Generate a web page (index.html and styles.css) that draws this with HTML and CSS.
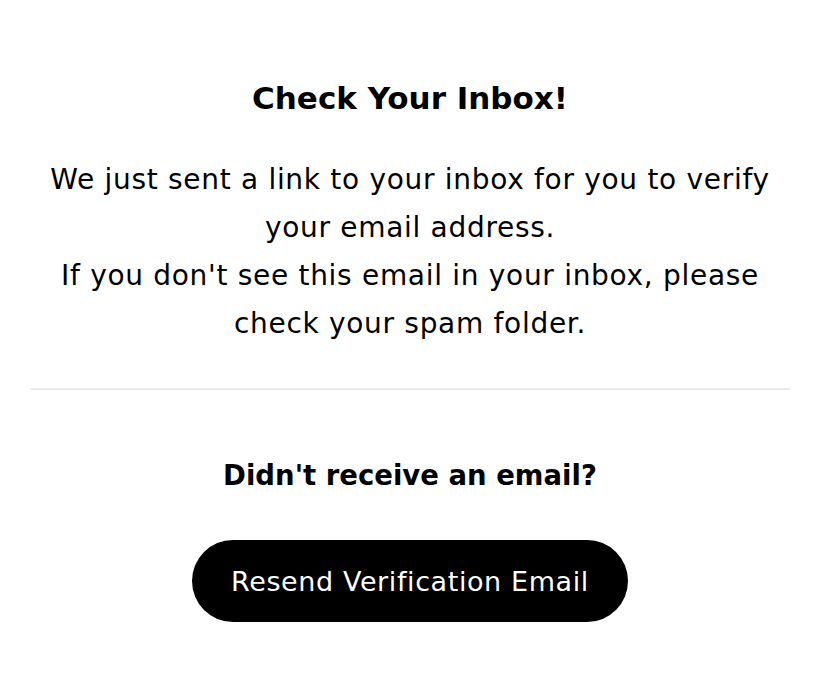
FILE: index.html
```html
<!DOCTYPE html>
<html lang="en">
<head>
<meta charset="utf-8">
<title>Check Your Inbox</title>
<link rel="stylesheet" href="styles.css">
</head>
<body>
<main class="card">
  <section class="top">
    <h1 class="title">Check Your Inbox!</h1>
    <p class="message">We just sent a link to your inbox for you to verify your email address.<br>If you don't see this email in your inbox, please check your spam folder.</p>
  </section>
  <hr class="divider">
  <section class="bottom">
    <h2 class="subtitle">Didn't receive an email?</h2>
    <button class="resend" type="button">Resend Verification Email</button>
  </section>
</main>
</body>
</html>
```
FILE: styles.css
```css
* { box-sizing: border-box; }
html, body { margin: 0; padding: 0; background: #fff; }
body {
  font-family: "DejaVu Sans", "Noto Sans", sans-serif;
  color: #000;
}
.card {
  padding: 74px 24px 0 30px;
  display: flex;
  flex-direction: column;
}
.top {
  display: flex;
  flex-direction: column;
  align-items: center;
  gap: 34px;
  text-align: center;
}
.title {
  margin: 0;
  font-size: 31px;
  line-height: 48px;
  font-weight: 700;
}
.message {
  margin: 0;
  font-size: 28px;
  line-height: 48px;
  font-weight: 400;
  letter-spacing: 0.7px;
}
.divider {
  margin: 40px 0 0;
  border: 0;
  height: 2px;
  background: #ebebeb;
}
.bottom {
  display: flex;
  flex-direction: column;
  align-items: center;
  padding-top: 61px;
  gap: 41px;
}
.subtitle {
  margin: 0;
  font-size: 27.5px;
  line-height: 48px;
  font-weight: 700;
}
.resend {
  width: 436px;
  height: 82px;
  border: 0;
  border-radius: 41px;
  background: #000;
  color: #fff;
  font-family: inherit;
  font-size: 27px;
  font-weight: 400;
  letter-spacing: 0.6px;
  cursor: pointer;
}
```
